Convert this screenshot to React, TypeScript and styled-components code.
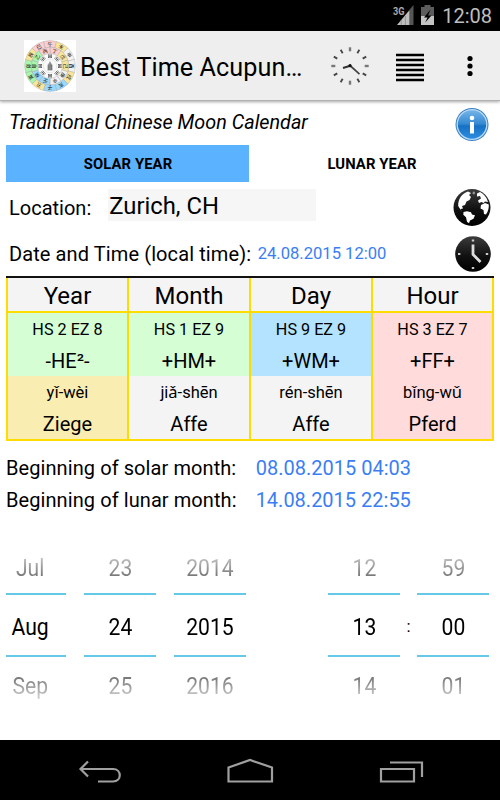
import React from 'react';
import styled, { createGlobalStyle } from 'styled-components';

const GlobalStyle = createGlobalStyle`
  * { box-sizing: border-box; }
  body { margin: 0; background: #fff; }
  svg { display: block; flex: none; }
`;

const Screen = styled.div`
  width: 500px;
  height: 800px;
  display: flex;
  flex-direction: column;
  overflow: hidden;
  background: #fff;
  color: #000;
  font-family: Roboto, "Noto Sans", sans-serif;
`;

const StatusBar = styled.div`
  height: 31px;
  flex: none;
  display: flex;
  align-items: center;
  justify-content: flex-end;
  padding-right: 8px;
  background: #000;
  color: #bebebe;
`;

const ActionBar = styled.div`
  height: 70px;
  flex: none;
  display: flex;
  align-items: center;
  padding-left: 24px;
  background: #eee;
  border-bottom: 1px solid #b2b2b2;
  box-shadow: 0 1px 3px rgba(0, 0, 0, 0.35);
`;

const Label = styled.span<{ $size: number; $gap?: number; $left?: number; $color?: string; $top?: number }>`
  display: block;
  white-space: nowrap;
  font-size: ${p => p.$size}px;
  line-height: 1.2;
  letter-spacing: ${p => p.$gap ?? 0}px;
  margin-left: ${p => p.$left ?? 0}px;
  margin-top: ${p => p.$top ?? 0}px;
  color: ${p => p.$color ?? 'inherit'};
`;

const Emphasis = styled(Label)`
  font-style: italic;
`;

const Row = styled.div<{ $height: number; $left: number; $right?: number }>`
  height: ${p => p.$height}px;
  flex: none;
  display: flex;
  align-items: center;
  padding-left: ${p => p.$left}px;
  padding-right: ${p => p.$right ?? 0}px;
`;

const Spacer = styled.div`
  flex: 1;
`;

const Tabs = styled.div`
  display: grid;
  grid-template-columns: 243px 245px;
  height: 38px;
  flex: none;
  padding: 0 6px;
`;

const Tab = styled.div<{ $active?: boolean }>`
  display: flex;
  align-items: center;
  justify-content: center;
  height: 37px;
  padding-left: 1px;
  background: ${p => (p.$active ? '#5bb2ff' : '#fff')};
  font-size: 14.8px;
  font-weight: 700;
  letter-spacing: 0.1px;
`;

const LocationField = styled.div`
  width: 208px;
  height: 32px;
  margin-left: 17px;
  margin-bottom: 4px;
  padding: 2px 0 0 1px;
  display: flex;
  align-items: center;
  background: #f6f6f6;
`;

const Table = styled.div`
  width: 488px;
  height: 165px;
  flex: none;
  margin-left: 6px;
  display: grid;
  grid-template-columns: 119px 120px 120px 119px;
  column-gap: 2px;
  padding: 0 2px 2px;
  background: #ffdc00;
  border-top: 2px solid #111;
`;

const Pillar = styled.div`
  display: grid;
  grid-template-rows: 33px 63px 63px;
`;

const PillarHead = styled.div`
  display: flex;
  align-items: center;
  justify-content: center;
  height: 33px;
  padding: 3px 0 0;
  background: #f4f4f4;
`;

const PillarCell = styled.div<{ $fill: string }>`
  display: grid;
  grid-template-rows: 32px 31px;
  align-items: center;
  justify-items: center;
  transform: translateY(2px);
  background: ${p => p.$fill};
`;

const Pickers = styled.div`
  display: flex;
  height: 222px;
  flex: none;
  padding: 21px 0 0 6px;
`;

const Wheel = styled.div<{ $width: number; $left: number }>`
  width: ${p => p.$width}px;
  margin-left: ${p => p.$left}px;
  display: grid;
  grid-template-rows: 56px 64px 58px;
  align-content: start;
`;

const WheelItem = styled.div<{ $kind: 'prev' | 'now' | 'next'; $shift: number }>`
  display: flex;
  align-items: center;
  justify-content: center;
  font-size: 24px;
  white-space: nowrap;
  ${p => p.$kind === 'now' && 'border: solid #65c8e8; border-width: 2px 0; padding-top: 4px;'}
  ${p => p.$kind === 'prev' && 'padding-top: 6px;'}

  > span {
    line-height: 32px;
    transform: translateX(${p => p.$shift}px) scaleX(0.88);
    ${p => p.$kind === 'prev' && 'color: transparent; background: linear-gradient(#c4c4c4 15%, #6c6c6c 85%); background-clip: text;'}
    ${p => p.$kind === 'next' && 'color: transparent; background: linear-gradient(#6c6c6c 15%, #d4d4d4 90%); background-clip: text;'}
  }
`;

const Colon = styled.div`
  width: 17px;
  padding-top: 79px;
  text-align: center;
  font-size: 17px;
  line-height: 20px;
`;

const NavBar = styled.div`
  height: 60px;
  flex: none;
  margin-top: auto;
  background: #000;
`;

const PINK = '#fbcfd0', GOLD = '#f8e59a', WHITE = '#f2f2f2', BLUE = '#9bd8fb', GREEN = '#a9f5ad';

const branches: [string, string][] = [
  ['午', PINK], ['未', GOLD], ['申', WHITE], ['酉', WHITE], ['戌', GOLD], ['亥', BLUE],
  ['子', BLUE], ['丑', GOLD], ['寅', GREEN], ['卯', GREEN], ['辰', GOLD], ['巳', PINK],
];
const stems: [string, string][] = [
  ['丁', PINK], ['戊', GOLD], ['己', GOLD], ['庚', WHITE], ['辛', WHITE],
  ['壬', BLUE], ['癸', BLUE], ['甲', GREEN], ['乙', GREEN], ['丙', PINK],
];

const sector = (a: number, b: number, inner: number, outer: number) => {
  const pt = (deg: number, r: number) => {
    const t = (deg * Math.PI) / 180;
    return `${(r * Math.sin(t)).toFixed(2)} ${(-r * Math.cos(t)).toFixed(2)}`;
  };
  return `M${pt(a, inner)}L${pt(a, outer)}A${outer} ${outer} 0 0 1 ${pt(b, outer)}L${pt(b, inner)}A${inner} ${inner} 0 0 0 ${pt(a, inner)}Z`;
};

const Ring = ({ items, offset, inner, outer }: { items: [string, string][]; offset: number; inner: number; outer: number }) => {
  const step = 360 / items.length;
  return (
    <>
      {items.map(([char, fill], i) => {
        const mid = offset + i * step;
        return (
          <g key={char}>
            <path d={sector(mid - step / 2, mid + step / 2, inner, outer)} fill={fill} stroke="#999" strokeWidth=".35" />
            <text transform={`rotate(${mid})`} y={-(inner + outer) / 2 + 1.8} fontSize="5" textAnchor="middle" fill="#111">{char}</text>
          </g>
        );
      })}
    </>
  );
};

const WheelLogo = () => (
  <svg width="52" height="52" viewBox="-26 -26 52 52" fontFamily='"Noto Sans CJK SC", sans-serif'>
    <rect x="-26" y="-26" width="52" height="52" fill="#fff" />
    <Ring items={branches} offset={0} inner={18.8} outer={25.4} />
    <Ring items={stems} offset={18} inner={12.3} outer={18.8} />
    <circle r="12.3" fill="#fafafa" stroke="#bbb" strokeWidth=".4" />
    {[0, 45, 90, 135, 180, 225, 270, 315].map(a => (
      <g key={a} transform={`rotate(${a})`}>
        <path d="M-2-11h1.7M.3-11H2M-2-9.8h4M-2-8.6h1.7M.3-8.6H2" stroke="#222" strokeWidth=".75" />
      </g>
    ))}
    <circle r="6.8" fill="none" stroke="#ccc" strokeWidth=".4" />
    <path d="M0-5.3L1-3l1.5 2v5.5h-5V-1L-1-3Z" fill="#999" />
    <path d="M-1.3-1v5M.2-2.5V4M1.5-1v5" stroke="#555" strokeWidth=".5" />
  </svg>
);

const TimerIcon = () => (
  <svg width="40" height="40" viewBox="-20 -20 40 40">
    {Array.from({ length: 12 }, (_, i) => (
      <path key={i} d="M0-18.7v4" stroke={i % 3 ? '#444' : '#777'} strokeWidth={i % 3 ? 1.8 : 2.4} transform={`rotate(${i * 30})`} />
    ))}
    <path d="M0-.5L9.5 8.2" stroke="#444" strokeWidth="1.7" />
    <path d="M1-.5L-7 2" stroke="#333" strokeWidth="2" />
    <circle r="1.6" cy="-.3" fill="#111" />
  </svg>
);

const StatusIcons = () => (
  <svg width="44" height="26" viewBox="393 3 44 26">
    <text x="394" y="14.5" fontFamily="Roboto, sans-serif" fontSize="10.5" fontWeight="700" fill="#aaa" textLength="11.5" lengthAdjust="spacingAndGlyphs">3G</text>
    <path d="M410.5 9.8L414.5 5V25h-4Z" fill="#555" />
    <path d="M398 25L410.5 10V25Z" fill="#bebebe" />
    <path d="M402.2 20v5M406.4 16v9M410.5 11v14" stroke="#777" strokeWidth=".6" />
    <path d="M422 7h3.500V5h6v2h3.500v9h-13Z" fill="#5c5c5c" />
    <path d="M422 16h13v9h-13Z" fill="#c4c4c4" />
    <path d="M431.5 9.5l-6.5 8h3.5l-2.3 5 6.3-7h-3.4Z" fill="#000" />
  </svg>
);

const InfoIcon = () => (
  <svg width="36" height="36" viewBox="-18 -19.500 36 36">
    <defs>
      <linearGradient id="info" x1="0" y1="0" x2="0" y2="1">
        <stop offset="0" stopColor="#78b6e8" />
        <stop offset=".48" stopColor="#3489d2" />
        <stop offset=".55" stopColor="#1670c4" />
        <stop offset="1" stopColor="#2f8ee0" />
      </linearGradient>
    </defs>
    <circle r="16.500" fill="#3c82c4" />
    <circle r="14.800" fill="url(#info)" stroke="#b9daf5" strokeWidth="1.3" />
    <circle cy="-6.5" r="2.3" fill="#fff" />
    <path d="M-2-2.500h4V9h-4Z" fill="#fff" />
  </svg>
);

const GlobeIcon = () => (
  <svg width="38" height="38" viewBox="0 0 38 38">
    <defs>
      <linearGradient id="dark" x1="0" y1="0" x2="0" y2="1">
        <stop offset="0" stopColor="#3c3c3c" />
        <stop offset=".55" stopColor="#111" />
        <stop offset="1" stopColor="#000" />
      </linearGradient>
    </defs>
    <circle cx="19" cy="19.500" r="18.5" fill="url(#dark)" />
    <path d="M5.2 18C5 11 8.500 6 15 3.500L18 5l-2 2 2 2-1.500 3-3 1.500-1.500 3.500-3 1 1 2.500-2.500.5 1.500 3Z" fill="#fff" />
    <path d="M10.500 24l3.500-.8 4 1 1 2.300 3 .8-1.500 3.500-3.500 1.700-1 2.700-2-1.500-1-4.500-2.700-2.500Z" fill="#fff" />
    <path d="M24 5.500l3-1.500c4 2 6.500 5 8 10l-3-.5-1.500 1.500-2-1-2.500 1-1-2.500 3-2-1-2.500-3 .5ZM28 17l4-2 3.800 1.500c.2 4-.8 7-2.800 10l-2-.5-.5-4-3-1.500Z" fill="#fff" />
    <path d="M20 3.500l2 .5-.5 2.500-2-.5Z" fill="#999" />
  </svg>
);

const ClockIcon = () => (
  <svg width="36" height="36" viewBox="-18 -18 36 36">
    <circle r="17.800" fill="url(#dark)" />
    <path d="M0-9.500V.5l7.500 7.500" fill="none" stroke="#ddd" strokeWidth="2.800" />
    <path d="M-1.200-14.500h2.400v2h-2.400ZM-1.200 13h2.400v2h-2.400ZM-15-1h2.400v2H-15ZM12.800-1h2.400v2h-2.400Z" fill="#ccc" />
  </svg>
);

const pillars = [
  { head: 'Year', code: 'HS 2 EZ 8', sign: '-HE²-', pinyin: 'yǐ-wèi', animal: 'Ziege', top: '#d5fed5', bottom: '#faedb1' },
  { head: 'Month', code: 'HS 1 EZ 9', sign: '+HM+', pinyin: 'jiǎ-shēn', animal: 'Affe', top: '#d5fed5', bottom: '#f4f4f4' },
  { head: 'Day', code: 'HS 9 EZ 9', sign: '+WM+', pinyin: 'rén-shēn', animal: 'Affe', top: '#b4e3ff', bottom: '#f4f4f4' },
  { head: 'Hour', code: 'HS 3 EZ 7', sign: '+FF+', pinyin: 'bǐng-wǔ', animal: 'Pferd', top: '#ffdbdb', bottom: '#ffdbdb' },
];

const PickerWheel = ({ width, left, values, shift = 0 }: { width: number; left: number; values: string[]; shift?: number }) => (
  <Wheel $width={width} $left={left}>
    <WheelItem $kind="prev" $shift={shift}><span>{values[0]}</span></WheelItem>
    <WheelItem $kind="now" $shift={shift}><span>{values[1]}</span></WheelItem>
    <WheelItem $kind="next" $shift={shift}><span>{values[2]}</span></WheelItem>
  </Wheel>
);

export default function App() {
  return (
    <Screen>
      <GlobalStyle />
      <StatusBar>
        <StatusIcons />
        <Label $size={20} $left={6} $top={1}>12:08</Label>
      </StatusBar>
      <ActionBar>
        <WheelLogo />
        <Label $size={25.2} $gap={0.07} $left={4} $top={6}>Best Time Acupun…</Label>
        <Spacer />
        <TimerIcon />
        <svg width="100" height="40" viewBox="370 46 100 40">
          <path d="M396 55h28M396 60h28M396 65h28M396 70h28M396 75h28M396 80h28" stroke="#000" strokeWidth="2.400" />
        </svg>
        <svg width="30" height="40" viewBox="470 46 30 40" overflow="visible">
          <g fill="#000"><circle cx="470" cy="58.500" r="2.600" /><circle cx="470" cy="66" r="2.600" /><circle cx="470" cy="73.500" r="2.600" /></g>
        </svg>
      </ActionBar>
      <Row $height={44} $left={9} $right={10}>
        <Emphasis $size={19.8} $top={-1}>Traditional Chinese Moon Calendar</Emphasis>
        <Spacer />
        <InfoIcon />
      </Row>
      <Tabs>
        <Tab $active>SOLAR YEAR</Tab>
        <Tab>LUNAR YEAR</Tab>
      </Tabs>
      <Row $height={48} $left={9} $right={9}>
        <Label $size={20} $top={2}>Location:</Label>
        <LocationField><Label $size={23.8}>Zurich, CH</Label></LocationField>
        <Spacer />
        <GlobeIcon />
      </Row>
      <Row $height={45} $left={9} $right={9}>
        <Label $size={20} $gap={0.1}>Date and Time (local time):</Label>
        <Label $size={16.6} $left={6.5} $top={1} $color="#3b7ef4">24.08.2015 12:00</Label>
        <Spacer />
        <ClockIcon />
      </Row>
      <Table>
        {pillars.map(p => (
          <Pillar key={p.head}>
            <PillarHead><Label $size={24}>{p.head}</Label></PillarHead>
            <PillarCell $fill={p.top}>
              <Label $size={16.2} $top={2}>{p.code}</Label>
              <Label $size={20}>{p.sign}</Label>
            </PillarCell>
            <PillarCell $fill={p.bottom}>
              <Label $size={16.5} $top={2}>{p.pinyin}</Label>
              <Label $size={20}>{p.animal}</Label>
            </PillarCell>
          </Pillar>
        ))}
      </Table>
      <Row $height={11} $left={0} />
      <Row $height={32} $left={6}>
        <Label $size={20} $gap={0.08}>Beginning of solar month:</Label>
        <Label $size={20} $left={19.5} $color="#3b7ef4">08.08.2015 04:03</Label>
      </Row>
      <Row $height={32} $left={6}>
        <Label $size={20} $gap={0.08}>Beginning of lunar month:</Label>
        <Label $size={20} $left={19} $color="#3b7ef4">14.08.2015 22:55</Label>
      </Row>
      <Pickers>
        <PickerWheel width={60} left={0} values={['Jul', 'Aug', 'Sep']} shift={-6} />
        <PickerWheel width={72} left={18} values={['23', '24', '25']} />
        <PickerWheel width={72} left={18} values={['2014', '2015', '2016']} />
        <PickerWheel width={72} left={82} values={['12', '13', '14']} />
        <Colon>:</Colon>
        <PickerWheel width={72} left={0} values={['59', '00', '01']} />
      </Pickers>
      <NavBar>
        <svg width="500" height="60" viewBox="0 740 500 60" fill="none" stroke="#a0a0a0" strokeWidth="2.200">
          <path d="M88 761.500L80.500 769l7.500 7.500M80.500 769H113c9 0 9 12.500 0 12.500H98" />
          <path d="M228.500 781.500V767.500L250 760l22 7.500V781.500Z" />
          <path d="M381 769h33v12.500h-33ZM390 762.500h32V777" />
        </svg>
      </NavBar>
    </Screen>
  );
}
